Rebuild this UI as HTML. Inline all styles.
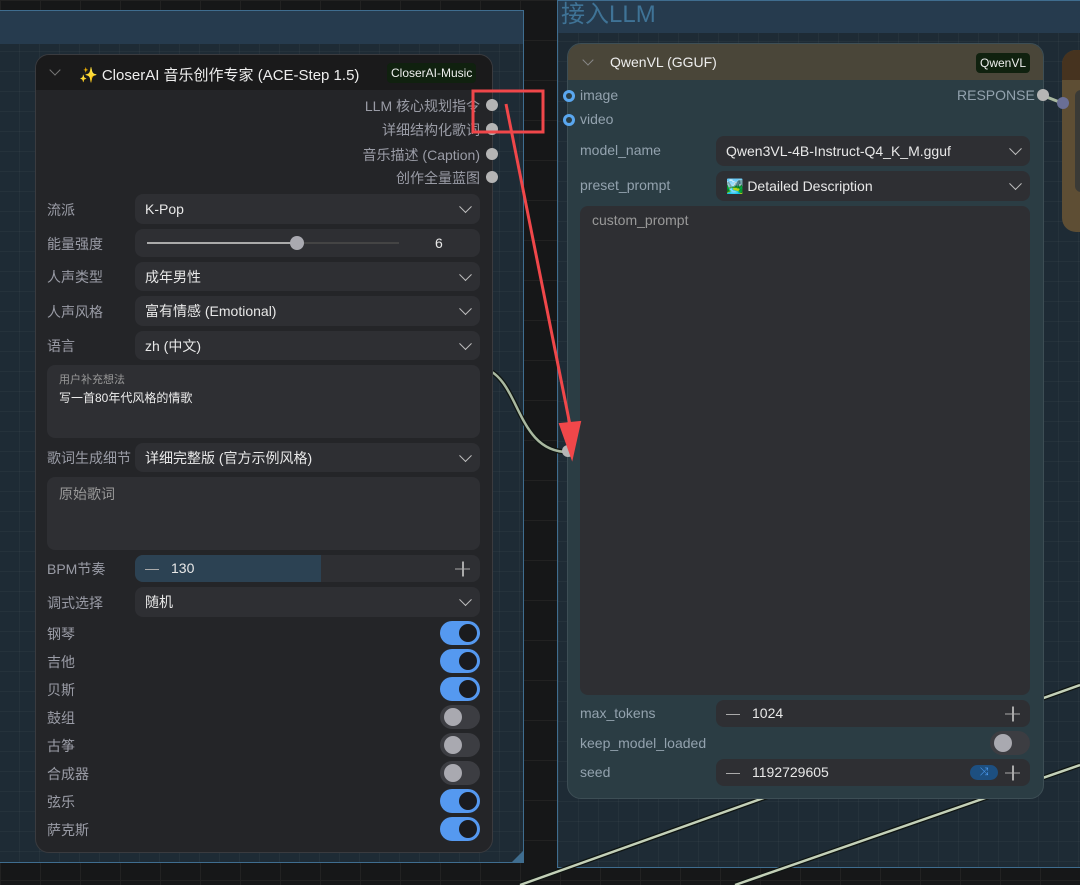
<!DOCTYPE html>
<html><head><meta charset="utf-8"><style>
*{box-sizing:border-box;margin:0;padding:0}
body{width:1080px;height:885px;overflow:hidden;position:relative;background:#161718;font-family:"Liberation Sans","Noto Sans CJK SC",sans-serif;font-size:14px;color:#ddd;
background-image:linear-gradient(#222 1px,transparent 1px),linear-gradient(90deg,#222 1px,transparent 1px);background-size:40px 40px}
.abs{position:absolute}
.grp{position:absolute;background:#1e2b35;border:1px solid #3f6d8f;
background-image:linear-gradient(rgba(255,255,255,.03) 1px,transparent 1px),linear-gradient(90deg,rgba(255,255,255,.03) 1px,transparent 1px);background-size:20px 20px}
.lbl{position:absolute;color:#9a9ca6;font-size:14px}
.rl{color:#93a2ae}
.w{position:absolute;background:#2e2f33;border-radius:8px;color:#e8e8e8;font-size:14px;display:flex;align-items:center;padding-left:10px}
.chev{position:absolute;right:10px;top:50%;width:9px;height:9px;border-right:1.6px solid #bbb;border-bottom:1.6px solid #bbb;transform:translateY(-75%) rotate(45deg)}
.dot{position:absolute;width:12px;height:12px;border-radius:50%;background:#b5b5b5}
.tg{position:absolute;width:40px;height:24px;border-radius:12px;background:#5599f0}
.tg::after{content:"";position:absolute;right:3px;top:3px;width:18px;height:18px;border-radius:50%;background:#1a1b1e}
.tg.off{background:#3c3d42}
.tg.off::after{left:4px;right:auto;background:#a9a9b0}
.minus{position:absolute;left:10px;top:50%;width:14px;height:1.5px;background:#aaa}
.plus{position:absolute;right:10px;top:50%;width:15px;height:15px;transform:translateY(-50%)}
.plus::before{content:"";position:absolute;left:0;top:7px;width:15px;height:1.5px;background:#aaa}
.plus::after{content:"";position:absolute;left:7px;top:0;width:1.5px;height:15px;background:#aaa}
</style></head><body>

<div class="grp" style="left:-2px;top:10px;width:526px;height:853px"></div>
<div class="abs" style="left:-2px;top:11px;width:525px;height:33px;background:#263b4e"></div>
<div class="abs" style="left:512px;top:851px;width:0;height:0;border-left:11px solid transparent;border-bottom:11px solid #3f6d8f"></div>

<div class="grp" style="left:557px;top:0;width:530px;height:868px"></div>
<div class="abs" style="left:558px;top:1px;width:522px;height:32px;background:#263b4e"></div>
<div class="abs" style="left:561px;top:0;font-size:24px;color:#3f7396;line-height:30px">接入LLM</div>

<svg class="abs" style="left:0;top:0" width="1080" height="885">
<path d="M492 372 C520 390,520 452,568 452" stroke="#0f1512" stroke-width="5" fill="none"/>
<path d="M492 372 C520 390,520 452,568 452" stroke="#a9b8a0" stroke-width="2.5" fill="none"/>
<path d="M520 885 L1080 685" stroke="#0f1512" stroke-width="5"/>
<path d="M520 885 L1080 685" stroke="#c3d0b8" stroke-width="2.5"/>
<path d="M735 885 L1080 765" stroke="#0f1512" stroke-width="5"/>
<path d="M735 885 L1080 765" stroke="#c3d0b8" stroke-width="2.5"/>
<path d="M1044 96 L1062 103" stroke="#a9b8a0" stroke-width="3"/>
</svg>

<div class="abs" style="left:35px;top:54px;width:458px;height:799px;background:#242528;border:1px solid #3a3b3f;border-radius:14px;overflow:hidden">
 <div class="abs" style="left:0;top:0;width:458px;height:35px;background:#1a1a1b"></div>
 <div class="abs" style="left:15px;top:11px;width:8px;height:8px;border-right:1.3px solid #777;border-bottom:1.3px solid #777;transform:rotate(45deg)"></div>
 <div class="abs" style="left:43px;top:9px;font-size:15px;color:#eee">✨ CloserAI 音乐创作专家 (ACE-Step 1.5)</div>
 <div class="abs" style="left:351px;top:8px;height:20px;padding:0 4px;background:#10210f;border-radius:4px;font-size:12px;line-height:20px;color:#eee">CloserAI-Music</div>
</div>
<div class="lbl" style="right:600px;top:96px">LLM 核心规划指令</div>
<div class="lbl" style="right:600px;top:120px">详细结构化歌词</div>
<div class="lbl" style="right:600px;top:145px">音乐描述 (Caption)</div>
<div class="lbl" style="right:600px;top:168px">创作全量蓝图</div>
<div class="dot" style="left:486px;top:99px"></div>
<div class="dot" style="left:486px;top:123px"></div>
<div class="dot" style="left:486px;top:148px"></div>
<div class="dot" style="left:486px;top:171px"></div>

<div class="lbl" style="left:47px;top:200px">流派</div><div class="w" style="left:135px;top:194px;width:345px;height:30px">K-Pop<span class="chev"></span></div>
<div class="lbl" style="left:47px;top:234px">能量强度</div><div class="w" style="left:135px;top:229px;width:345px;height:28px">
 <div class="abs" style="left:12px;top:13px;width:150px;height:2px;background:#aaa"></div>
 <div class="abs" style="left:162px;top:13px;width:102px;height:2px;background:#444"></div>
 <div class="abs" style="left:155px;top:7px;width:14px;height:14px;border-radius:50%;background:#a9a9b0"></div>
 <div class="abs" style="left:300px;top:6px">6</div></div>
<div class="lbl" style="left:47px;top:267px">人声类型</div><div class="w" style="left:135px;top:262px;width:345px;height:29px">成年男性<span class="chev"></span></div>
<div class="lbl" style="left:47px;top:302px">人声风格</div><div class="w" style="left:135px;top:296px;width:345px;height:30px">富有情感 (Emotional)<span class="chev"></span></div>
<div class="lbl" style="left:47px;top:336px">语言</div><div class="w" style="left:135px;top:331px;width:345px;height:29px">zh (中文)<span class="chev"></span></div>
<div class="w" style="left:47px;top:365px;width:433px;height:73px;display:block;padding:6px 12px">
 <div style="font-size:11px;color:#999">用户补充想法</div><div style="font-size:12px;color:#eee;margin-top:2px">写一首80年代风格的情歌</div></div>
<div class="lbl" style="left:47px;top:448px">歌词生成细节</div><div class="w" style="left:135px;top:443px;width:345px;height:29px">详细完整版 (官方示例风格)<span class="chev"></span></div>
<div class="w" style="left:47px;top:477px;width:433px;height:73px;display:block;padding:7px 12px;color:#999">原始歌词</div>
<div class="lbl" style="left:47px;top:559px">BPM节奏</div><div class="w" style="left:135px;top:555px;width:345px;height:27px;overflow:hidden">
 <div class="abs" style="left:0;top:0;width:186px;height:27px;background:#2c4253"></div><span class="minus"></span>
 <div class="abs" style="left:36px;top:5px">130</div><span class="plus"></span></div>
<div class="lbl" style="left:47px;top:593px">调式选择</div><div class="w" style="left:135px;top:587px;width:345px;height:30px">随机<span class="chev"></span></div>

<div class="lbl" style="left:47px;top:624px">钢琴</div><div class="tg" style="left:440px;top:621px"></div>
<div class="lbl" style="left:47px;top:652px">吉他</div><div class="tg" style="left:440px;top:649px"></div>
<div class="lbl" style="left:47px;top:680px">贝斯</div><div class="tg" style="left:440px;top:677px"></div>
<div class="lbl" style="left:47px;top:708px">鼓组</div><div class="tg off" style="left:440px;top:705px"></div>
<div class="lbl" style="left:47px;top:736px">古筝</div><div class="tg off" style="left:440px;top:733px"></div>
<div class="lbl" style="left:47px;top:764px">合成器</div><div class="tg off" style="left:440px;top:761px"></div>
<div class="lbl" style="left:47px;top:792px">弦乐</div><div class="tg" style="left:440px;top:789px"></div>
<div class="lbl" style="left:47px;top:820px">萨克斯</div><div class="tg" style="left:440px;top:817px"></div>

<div class="abs" style="left:1062px;top:50px;width:40px;height:182px;background:#5e4e34;border-radius:14px;overflow:hidden">
 <div class="abs" style="left:0;top:0;width:40px;height:30px;background:#46331f"></div>
 <div class="abs" style="left:13px;top:40px;width:30px;height:102px;background:#3a3a36;border-radius:6px"></div>
</div>
<div class="dot" style="left:1057px;top:97px;background:#6a6f96"></div>

<div class="abs" style="left:567px;top:43px;width:477px;height:756px;background:#2b3d44;border:1px solid #3d4e55;border-radius:14px;overflow:hidden">
 <div class="abs" style="left:0;top:0;width:477px;height:36px;background:#4a4639"></div>
 <div class="abs" style="left:16px;top:12px;width:8px;height:8px;border-right:1.3px solid #888;border-bottom:1.3px solid #888;transform:rotate(45deg)"></div>
 <div class="abs" style="left:42px;top:10px;font-size:14px;color:#eee">QwenVL (GGUF)</div>
 <div class="abs" style="left:408px;top:9px;height:20px;padding:0 4px;background:#10210f;border-radius:4px;font-size:12px;line-height:20px;color:#eee">QwenVL</div>
</div>
<div class="dot" style="left:563px;top:90px;background:#5aa7f0"></div><div class="abs" style="left:566px;top:93px;width:6px;height:6px;border-radius:50%;background:#2b3d44"></div>
<div class="dot" style="left:563px;top:114px;background:#5aa7f0"></div><div class="abs" style="left:566px;top:117px;width:6px;height:6px;border-radius:50%;background:#2b3d44"></div>
<div class="lbl rl" style="left:580px;top:87px">image</div>
<div class="lbl rl" style="left:580px;top:111px">video</div>
<div class="lbl rl" style="left:957px;top:87px">RESPONSE</div>
<div class="dot" style="left:1037px;top:89px"></div>
<div class="dot" style="left:562px;top:445px"></div>

<div class="lbl rl" style="left:580px;top:142px">model_name</div><div class="w" style="left:716px;top:136px;width:314px;height:30px">Qwen3VL-4B-Instruct-Q4_K_M.gguf<span class="chev"></span></div>
<div class="lbl rl" style="left:580px;top:177px">preset_prompt</div><div class="w" style="left:716px;top:171px;width:314px;height:30px">🏞️&nbsp;Detailed Description<span class="chev"></span></div>
<div class="w" style="left:580px;top:206px;width:450px;height:489px;display:block;padding:6px 12px;color:#999">custom_prompt</div>
<div class="lbl rl" style="left:580px;top:705px">max_tokens</div><div class="w" style="left:716px;top:700px;width:314px;height:27px"><span class="minus"></span><div class="abs" style="left:36px;top:5px">1024</div><span class="plus"></span></div>
<div class="lbl rl" style="left:580px;top:735px">keep_model_loaded</div><div class="tg off" style="left:990px;top:731px;width:40px"></div>
<div class="lbl rl" style="left:580px;top:764px">seed</div><div class="w" style="left:716px;top:759px;width:314px;height:27px"><span class="minus"></span><div class="abs" style="left:36px;top:5px">1192729605</div>
 <div class="abs" style="left:254px;top:6px;width:28px;height:15px;border-radius:8px;background:#1d4f80;color:#4b9af0;font-size:11px;text-align:center;line-height:15px">⤨</div><span class="plus"></span></div>

<svg class="abs" style="left:0;top:0" width="1080" height="885">
<rect x="473" y="91" width="70" height="41" fill="none" stroke="#f0474a" stroke-width="3"/>
<path d="M506 104 L570 425" stroke="#f0474a" stroke-width="3"/>
<path d="M560 424 L572 458 L580 422 Z" fill="#f0474a" stroke="#f0474a" stroke-width="2"/>
</svg>
</body></html>
